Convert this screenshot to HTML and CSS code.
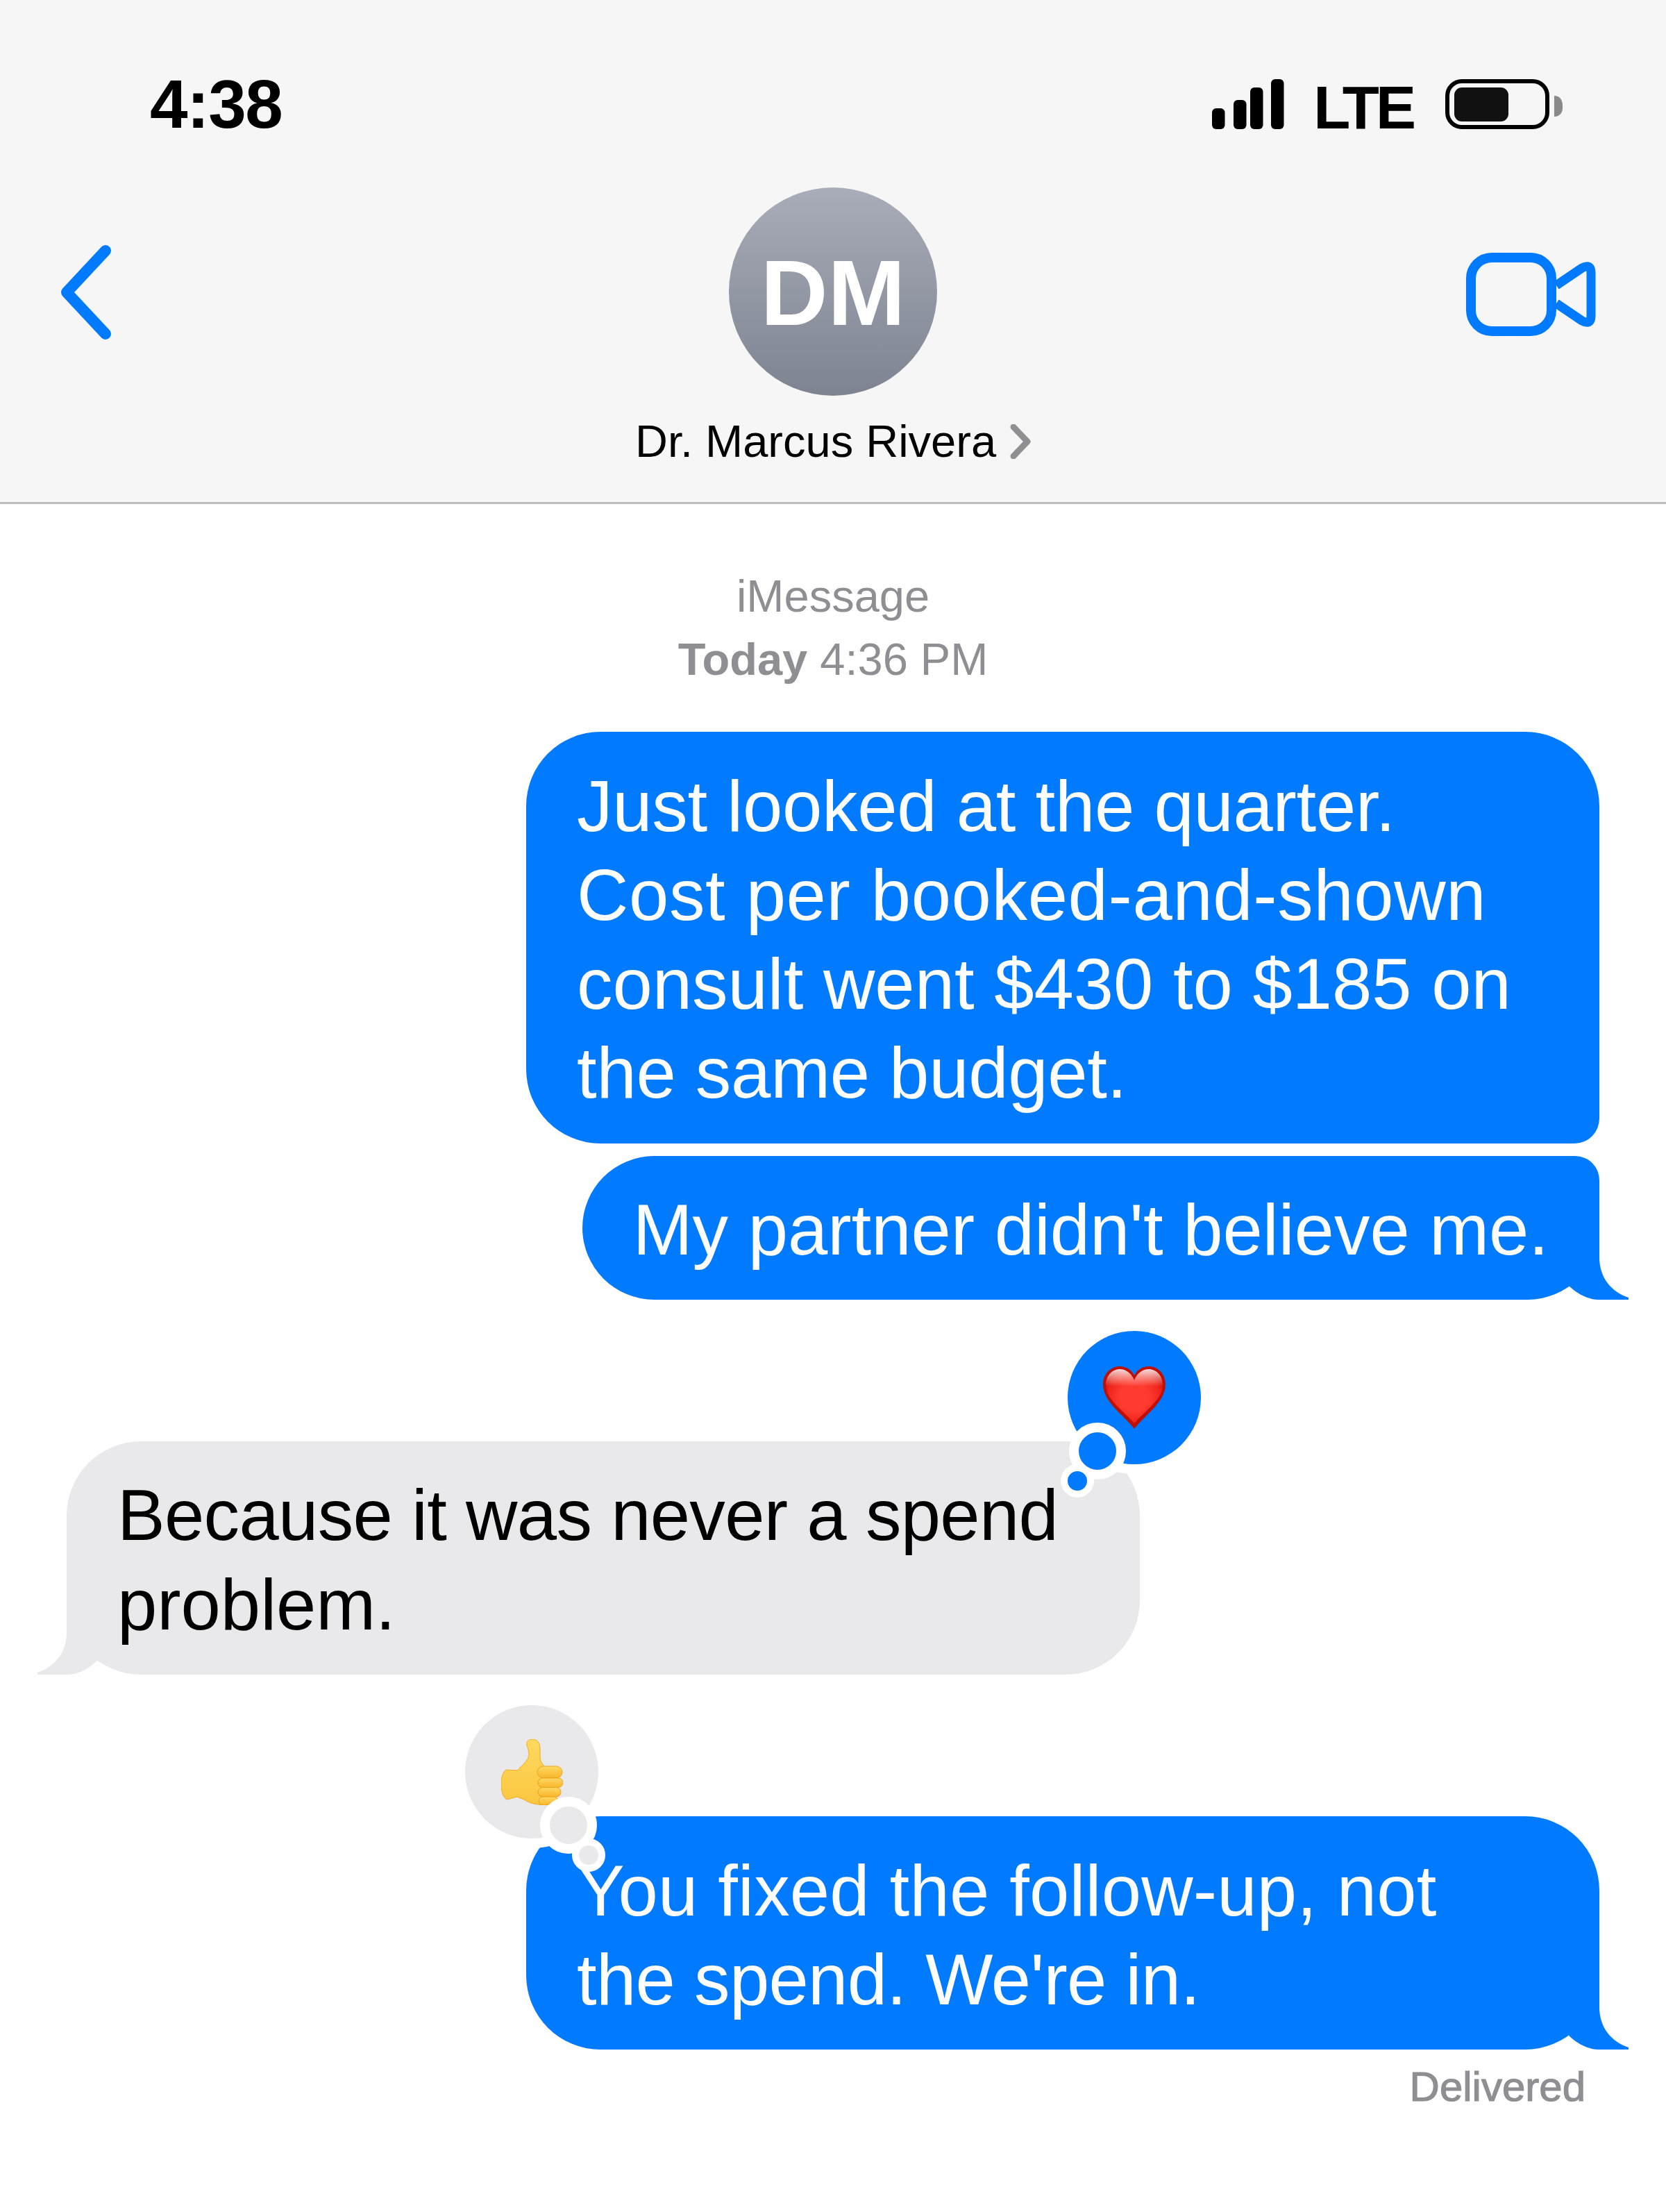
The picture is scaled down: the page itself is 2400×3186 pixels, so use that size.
FILE: index.html
```html
<!DOCTYPE html>
<html>
	<head>
		<meta charset="utf-8">
		<title>Dr. Marcus Rivera</title>
		<link rel="stylesheet" href="styles.css">
	</head>
	<body>
		<header class="top">
			<div class="status">
				<span class="clock">4:38</span>
				<div class="status-right">
					<svg class="signal" width="104" height="72" viewBox="0 0 104 72">
						<rect x="0" y="42" width="18.5" height="30" rx="6"/>
						<rect x="31" y="30" width="18.5" height="42" rx="6"/>
						<rect x="55" y="12" width="18.5" height="60" rx="6"/>
						<rect x="85" y="0" width="18.5" height="72" rx="6"/>
					</svg>
					<span class="net">LTE</span>
					<svg class="battery" width="170" height="72" viewBox="0 0 170 72">
						<rect x="3" y="3" width="144" height="66" rx="21" fill="none" stroke="#000" stroke-width="6"/>
						<rect x="13" y="12" width="78" height="49" rx="11" fill="#111"/>
						<path d="M157 24 C165 24 169 30 169 38 V42 C169 48 165 54 157 54 Z" fill="#8a8a8a"/>
					</svg>
				</div>
			</div>
			<div class="nav">
				<svg class="back" width="90" height="150" viewBox="0 0 90 150">
					<path d="M71 15 L15 75 L71 135" fill="none" stroke="#007aff" stroke-width="16" stroke-linecap="round" stroke-linejoin="round"/>
				</svg>
				<div class="contact">
					<div class="avatar">DM</div>
					<div class="name">
						<span>Dr. Marcus Rivera</span>
						<svg width="30" height="50" viewBox="0 0 30 50">
							<path d="M5 4 L25 25 L5 46" fill="none" stroke="#8e8e93" stroke-width="9" stroke-linecap="round" stroke-linejoin="round"/>
						</svg>
					</div>
				</div>
				<svg class="video" width="187" height="120" viewBox="0 0 187 120">
					<rect x="7" y="7" width="116" height="106" rx="30" fill="none" stroke="#007aff" stroke-width="14"/>
					<path d="M130 47 L167 22 Q180 15 180 29 V91 Q180 105 167 98 L130 73" fill="none" stroke="#007aff" stroke-width="13" stroke-linejoin="round"/>
				</svg>
			</div>
		</header>

		<main class="thread">
			<div class="stamp">
				<div>iMessage</div>
				<div><b>Today</b> 4:36 PM</div>
			</div>

			<div class="msg out first"><span class="fit-snug">Just looked at the quarter.</span> <span class="fit-loose">Cost per booked-and-shown</span> consult went $430 to $185 on <span class="fit-snug">the same budget.</span></div>

			<div class="msg out last">
				My partner didn't believe me.
				<svg class="tail" width="149" height="107" viewBox="0 0 149 107"><path d="M107 0 V46 C107 76 125 96 149 104 V107 H106 C90 107 75 98 63 87 Z"/></svg>
			</div>

			<div class="msg in">
				<span class="fit-tight">Because it was never a spend</span> problem.
				<svg class="tail" width="149" height="107" viewBox="0 0 149 107"><path d="M107 0 V46 C107 76 125 96 149 104 V107 H106 C90 107 75 98 63 87 Z"/></svg>
				<div class="tapback tapback-blue tapback-right">
					<svg class="heart" width="90" height="90" viewBox="0 0 90 90">
						<defs>
							<radialGradient id="heartFill" cx="50%" cy="52%" r="55%">
								<stop offset="0.45" stop-color="#ff3b30"/>
								<stop offset="0.85" stop-color="#f0241a"/>
								<stop offset="1" stop-color="#d0140a"/>
							</radialGradient>
							<linearGradient id="heartShine" x1="0" y1="0" x2="0" y2="1">
								<stop offset="0" stop-color="#fff" stop-opacity="0.85"/>
								<stop offset="0.32" stop-color="#fff" stop-opacity="0"/>
							</linearGradient>
						</defs>
						<path d="M45 90 C32 72 0 52 0 26 C0 10 12 0 24 0 C33 0 41 5 45 13 C49 5 57 0 66 0 C78 0 90 10 90 26 C90 52 58 72 45 90Z" fill="#bf0f05"/>
						<path d="M45 82 C32 66 4 48 4 27 C4 13 14 4 24 4 C33 4 41 10 45 20 C49 10 57 4 66 4 C76 4 86 13 86 27 C86 48 58 66 45 82Z" fill="url(#heartFill)"/>
						<path d="M45 82 C32 66 4 48 4 27 C4 13 14 4 24 4 C33 4 41 10 45 20 C49 10 57 4 66 4 C76 4 86 13 86 27 C86 48 58 66 45 82Z" fill="url(#heartShine)"/>
					</svg>
					<span class="dot dot-big"></span>
					<span class="dot dot-small"></span>
				</div>
			</div>

			<div class="msg out last">
				<span class="fit-wide">You fixed the follow-up, not</span> <span class="fit-tight">the spend. We're in.</span>
				<svg class="tail" width="149" height="107" viewBox="0 0 149 107"><path d="M107 0 V46 C107 76 125 96 149 104 V107 H106 C90 107 75 98 63 87 Z"/></svg>
				<div class="tapback tapback-grey tapback-left">
					<svg class="thumb" width="89" height="95" viewBox="0 0 89 95">
						<defs>
							<linearGradient id="thumbFill" x1="0" y1="0" x2="0" y2="1">
								<stop offset="0" stop-color="#ffd95f"/>
								<stop offset="1" stop-color="#fbc640"/>
							</linearGradient>
							<linearGradient id="fingerFill" x1="0" y1="0" x2="0" y2="1">
								<stop offset="0" stop-color="#ffd862"/>
								<stop offset="1" stop-color="#f8b62c"/>
							</linearGradient>
						</defs>
						<path d="M37 8 C36 2 41 0 45 0 C52 0 56 6 56 14 C56 24 55 31 60 36 L66 50 L62 95 C50 94 42 93 33 87 L23 83 L8 87 C2 83 0 74 0 64 C0 56 2 48 7 44 L23 45 C30 38 40 30 40 22 C40 16 38 13 37 8Z" fill="url(#thumbFill)" stroke="#f2a91e" stroke-width="1"/>
						<rect x="52" y="39" width="36" height="17" rx="8.5" fill="url(#fingerFill)" stroke="#eda31b" stroke-width="1"/>
						<rect x="53" y="56" width="36" height="13.5" rx="6.7" fill="url(#fingerFill)" stroke="#eda31b" stroke-width="1"/>
						<rect x="53" y="69.5" width="33" height="13.5" rx="6.7" fill="url(#fingerFill)" stroke="#eda31b" stroke-width="1"/>
						<rect x="54" y="83" width="28" height="12" rx="6" fill="url(#fingerFill)" stroke="#eda31b" stroke-width="1"/>
					</svg>
					<span class="dot dot-big"></span>
					<span class="dot dot-small"></span>
				</div>
			</div>

			<div class="delivered">Delivered</div>
		</main>
	</body>
</html>
```

FILE: styles.css
```css
:root {
	--blue: #007aff;
	--grey: #e9e9eb;
	--label: #8e8e93;
	--bar: #f6f6f6;
}

body {
	margin: 0;
	background-color: #fff;
	font-family: "Liberation Sans", Arial, sans-serif;
	color: #000;
}

/* top bar */

.top {
	height: 723px;
	background-color: var(--bar);
	border-bottom: 3px solid #bdbdbd;
}

.status {
	display: flex;
	justify-content: space-between;
	align-items: flex-end;
	padding: 114px 148px 0 216px;
	height: 72px;
}

.clock {
	font-size: 98px;
	font-weight: bold;
	line-height: 72px;
	letter-spacing: -1.5px;
}

.status-right {
	display: flex;
	align-items: flex-end;
}

.net {
	margin-left: 42px;
	margin-right: 47px;
	font-size: 87px;
	font-weight: bold;
	line-height: 62px;
	letter-spacing: -5px;
}

.nav {
	display: grid;
	grid-template-columns: 1fr auto 1fr;
	margin-top: 84px;
	padding: 0 81px;
}

.back {
	margin-top: 76px;
}

.video {
	justify-self: end;
	margin-top: 94px;
	margin-right: 20px;
}

.contact {
	display: flex;
	flex-direction: column;
	align-items: center;
}

.avatar {
	width: 300px;
	height: 300px;
	border-radius: 50%;
	background: linear-gradient(#a9adb9, #7e8391);
	color: #fff;
	font-size: 134px;
	font-weight: bold;
	line-height: 304px;
	text-align: center;
}

.name {
	display: flex;
	align-items: center;
	gap: 20px;
	margin-top: 26px;
	font-size: 65px;
	line-height: 80px;
}

/* messages */

.thread {
	display: flex;
	flex-direction: column;
	align-items: flex-end;
	padding: 87px 96px 0;
}

.stamp {
	align-self: center;
	margin-bottom: 59px;
	font-size: 65px;
	line-height: 91px;
	color: var(--label);
	text-align: center;
}

.msg {
	position: relative;
	box-sizing: border-box;
	max-width: 1546px;
	padding: 43.5px 73px 36px;
	border-radius: 107px;
	font-size: 103px;
	line-height: 128.25px;
}

/* the lines run a little wider or narrower than in the system font */
.fit-tight {
	letter-spacing: -0.68px;
}

.fit-snug {
	letter-spacing: -0.24px;
}

.fit-wide {
	letter-spacing: 0.2px;
}

.fit-loose {
	letter-spacing: 0.65px;
}

.out {
	background-color: var(--blue);
	color: #fff;
	fill: var(--blue);
}

.in {
	align-self: flex-start;
	margin-top: 203.5px;
	background-color: var(--grey);
	fill: var(--grey);
}

.out.first {
	border-bottom-right-radius: 36px;
}

.out.last {
	margin-top: 18px;
	border-top-right-radius: 36px;
}

.in + .out.last {
	margin-top: 204.5px;
	border-top-right-radius: 107px;
}

.tail {
	position: absolute;
	bottom: 0;
	right: -42px;
}

.in .tail {
	right: auto;
	left: -42px;
	transform: scaleX(-1);
}

/* tapbacks */

.tapback {
	position: absolute;
	top: -159px;
	width: 192px;
	height: 192px;
	display: flex;
	align-items: center;
	justify-content: center;
	border-radius: 50%;
	box-shadow: 0 0 0 14px #fff;
}

.tapback-right {
	right: -88px;
}

.tapback-left {
	top: -160px;
	left: -88px;
}

.tapback-blue {
	background-color: var(--blue);
}

.tapback-grey {
	background-color: var(--grey);
}

.dot {
	position: absolute;
	box-sizing: border-box;
	border-radius: 50%;
	border-style: solid;
	border-color: #fff;
}

.tapback-blue .dot {
	background-color: var(--blue);
}

.tapback-grey .dot {
	background-color: var(--grey);
}

.dot-big {
	width: 82px;
	height: 82px;
	border-width: 14px;
}

.dot-small {
	width: 48px;
	height: 48px;
	border-width: 10px;
}

.tapback-right .dot-big {
	left: 2px;
	top: 132px;
}

.tapback-right .dot-small {
	left: -10px;
	top: 192px;
}

.tapback-left .dot-big {
	left: 108px;
	top: 132px;
}

.tapback-left .dot-small {
	left: 154px;
	top: 192px;
}

.delivered {
	margin: 19px 20px 0 0;
	font-size: 60px;
	line-height: 70px;
	color: var(--label);
	-webkit-text-stroke: 1.2px var(--label);
}
```
